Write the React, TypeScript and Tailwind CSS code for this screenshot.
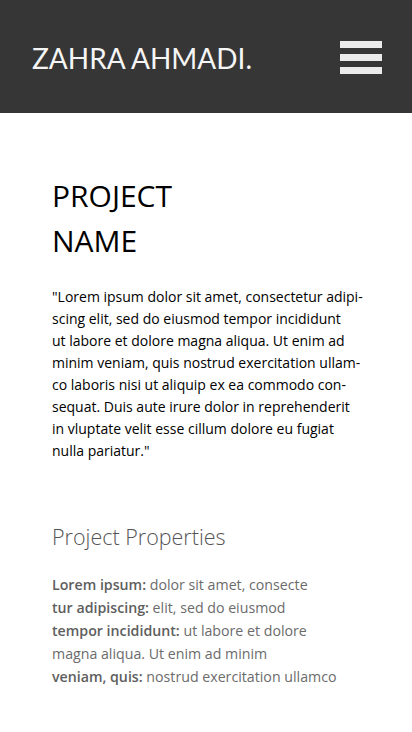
import React from "react";

const bodyLines = [
  '"Lorem ipsum dolor sit amet, consectetur adipi-',
  "scing elit, sed do eiusmod tempor incididunt",
  "ut labore et dolore magna aliqua. Ut enim ad",
  "minim veniam, quis nostrud exercitation ullam-",
  "co laboris nisi ut aliquip ex ea commodo con-",
  "sequat. Duis aute irure dolor in reprehenderit",
  "in vluptate velit esse cillum dolore eu fugiat",
  'nulla pariatur."',
];

const props: [string, string][] = [
  ["Lorem ipsum:", " dolor sit amet, consecte"],
  ["tur adipiscing:", " elit, sed do eiusmod"],
  ["tempor incididunt:", " ut labore et dolore"],
  ["", "magna aliqua. Ut enim ad minim"],
  ["veniam, quis:", " nostrud exercitation ullamco"],
];

export default function App() {
  return (
    <div className="w-[412px] min-h-[732px] bg-white" style={{ fontFamily: '"Open Sans", "Noto Sans", sans-serif' }}>
      <header className="h-[113px] bg-[#363636] flex items-center justify-between pl-[32px] pr-[30px]">
        <div className="text-[28px] text-[#f5f5f5] leading-none pt-[2px]" style={{ fontFamily: "Lato, sans-serif" }}>
          ZAHRA AHMADI.
        </div>
        <div className="flex flex-col gap-[6px] w-[42px] mt-[1px]">
          <div className="h-[7px] bg-[#ebebeb]" />
          <div className="h-[7px] bg-[#ebebeb]" />
          <div className="h-[7px] bg-[#ebebeb]" />
        </div>
      </header>
      <main className="pl-[52px] pt-[60px]">
        <h1 className="text-[30px] leading-[45px] font-normal text-black">
          PROJECT
          <br />
          NAME
        </h1>
        <p className="mt-[23px] text-[14px] leading-[22px] text-black">
          {bodyLines.map((l, i) => (
            <span key={i} className="block whitespace-nowrap">
              {l}
            </span>
          ))}
        </p>
        <h2 className="mt-[60px] text-[21.5px] leading-[30px] font-light text-[#555555]">Project Properties</h2>
        <div className="mt-[21px] text-[14.2px] leading-[23px] text-[#6b6b6b]">
          {props.map(([b, r], i) => (
            <div key={i} className="whitespace-nowrap">
              {b && <span className="font-semibold text-[#5e5e5e]">{b}</span>}
              {r}
            </div>
          ))}
        </div>
      </main>
    </div>
  );
}
